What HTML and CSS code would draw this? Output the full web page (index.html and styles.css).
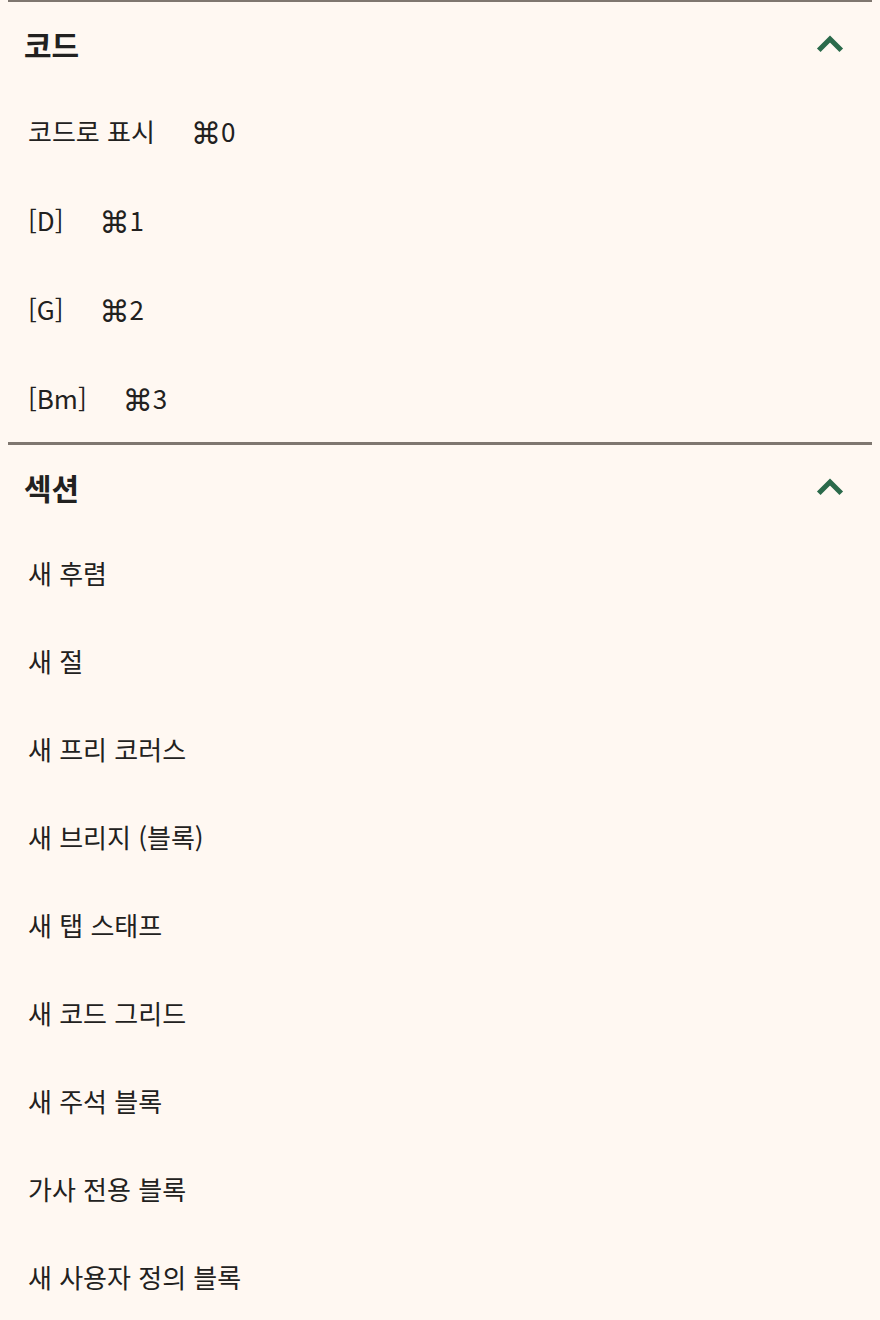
FILE: index.html
```html
<!DOCTYPE html>
<html lang="ko">
<head>
    <meta charset="UTF-8">
    <title>삽입 메뉴</title>
    <link rel="stylesheet" href="styles.css">
</head>
<body>
    <div class="menu">
        <section class="group group-first">
            <div class="group-header">
                <span class="group-title">코드</span>
                <svg class="chevron" viewBox="0 0 24 24"><path d="M4.5 15.5 L12 8 L19.5 15.5"/></svg>
            </div>
            <div class="item item-key"><span>코드로 표시</span><span class="key"><span class="cmd">⌘</span>0</span></div>
            <div class="item item-key"><span>[D]</span><span class="key"><span class="cmd">⌘</span>1</span></div>
            <div class="item item-key"><span>[G]</span><span class="key"><span class="cmd">⌘</span>2</span></div>
            <div class="item item-key"><span>[Bm]</span><span class="key"><span class="cmd">⌘</span>3</span></div>
        </section>

        <section class="group">
            <div class="group-header">
                <span class="group-title">섹션</span>
                <svg class="chevron" viewBox="0 0 24 24"><path d="M4.5 15.5 L12 8 L19.5 15.5"/></svg>
            </div>
            <div class="item">새 후렴</div>
            <div class="item">새 절</div>
            <div class="item">새 프리 코러스</div>
            <div class="item">새 브리지 (블록)</div>
            <div class="item">새 탭 스태프</div>
            <div class="item">새 코드 그리드</div>
            <div class="item">새 주석 블록</div>
            <div class="item">가사 전용 블록</div>
            <div class="item">새 사용자 정의 블록</div>
        </section>
    </div>
</body>
</html>
```

FILE: styles.css
```css
* {
    margin: 0;
    padding: 0;
    box-sizing: border-box;
}

html, body {
    background: #fff8f2;
}

body {
    margin: 0 8px;
    font-family: "Noto Sans CJK KR", "Noto Sans", sans-serif;
    color: #222120;
    overflow: hidden;
}

.group {
    border-top: 3px solid #7f7770;
}

.group-first {
    border-top-width: 2px;
}

.group-header {
    height: 84px;
    display: flex;
    align-items: center;
    justify-content: space-between;
    padding: 0 24px 0 16px;
}

.group-title {
    font-size: 30px;
    font-weight: 700;
    line-height: 1;
}

.chevron {
    width: 36px;
    height: 36px;
    margin-top: 2px;
    fill: none;
    stroke: #2b6a4b;
    stroke-width: 3.4;
}

.item {
    height: 88px;
    display: flex;
    align-items: center;
    padding-left: 20px;
    font-size: 26px;
    line-height: 1;
}

.item-key {
    height: 89px;
}

.key {
    margin-left: 36px;
}

.cmd {
    font-family: "DejaVu Sans", sans-serif;
    font-size: 30px;
    line-height: 0;
    vertical-align: -2px;
}
```
